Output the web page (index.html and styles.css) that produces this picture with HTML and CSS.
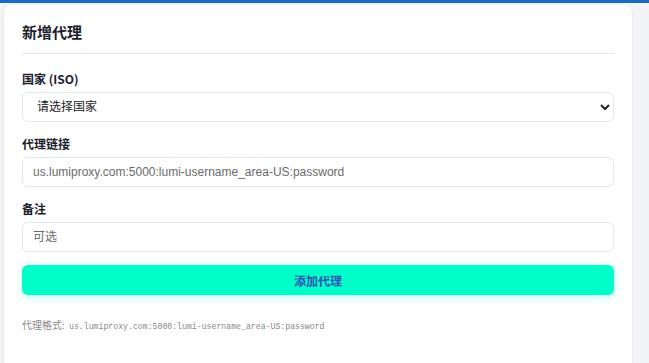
FILE: index.html
```html
<!DOCTYPE html>
<html lang="zh-CN">

<head>
    <meta charset="UTF-8">
    <meta name="viewport" content="width=device-width, initial-scale=1.0">
    <title>新增代理</title>
    <link rel="stylesheet" href="styles.css">
</head>

<body>
    <div class="top-bar"></div>

    <div class="page">
        <div class="card">
            <h2 class="card-title">新增代理</h2>

            <form class="proxy-form" onsubmit="return false;">
                <div class="field">
                    <label for="country">国家 (ISO)</label>
                    <select id="country">
                        <option value="">请选择国家</option>
                        <option value="US">US</option>
                        <option value="GB">GB</option>
                        <option value="JP">JP</option>
                    </select>
                </div>

                <div class="field">
                    <label for="proxyLink">代理链接</label>
                    <input id="proxyLink" type="text" placeholder="us.lumiproxy.com:5000:lumi-username_area-US:password">
                </div>

                <div class="field">
                    <label for="remark">备注</label>
                    <input id="remark" type="text" placeholder="可选">
                </div>

                <button type="submit" class="btn-add">添加代理</button>
            </form>

            <p class="hint">代理格式: <code>us.lumiproxy.com:5000:lumi-username_area-US:password</code></p>
        </div>
    </div>
</body>

</html>
```

FILE: styles.css
```css
:root {
    --bg-color: #f3f4f8;
    --text-color: #1a202c;
    --border-color: #e2e8f0;
    --accent: #00ffc8;
    --accent-text: #2c52b4;
    --bar-color: #1d6ac2;
}

body {
    font-family: 'Noto Sans CJK SC', 'Liberation Sans', sans-serif;
    color: var(--text-color);
    background-color: var(--bg-color);
    margin: 0;
    padding: 0;
}

.top-bar {
    height: 3px;
    background-color: var(--bar-color);
}

.page {
    padding: 2px 17px 0 4px;
}

.card {
    background: #ffffff;
    border-radius: 8px 8px 0 0;
    padding: 18px 18px 33px;
    box-shadow: 0 1px 4px rgba(0, 0, 0, 0.06);
}

.card-title {
    margin: 0 0 17px;
    padding-bottom: 12px;
    border-bottom: 1px solid var(--border-color);
    font-size: 15px;
    line-height: 18px;
    font-weight: 700;
}

.proxy-form {
    display: flex;
    flex-direction: column;
    gap: 14px;
}

.field {
    display: flex;
    flex-direction: column;
}

.field label {
    font-size: 12px;
    line-height: 16px;
    font-weight: 700;
    margin-bottom: 5px;
}

.field input,
.field select {
    box-sizing: border-box;
    height: 30px;
    padding: 0 10px;
    border: 1px solid var(--border-color);
    border-radius: 6px;
    background-color: #ffffff;
    font-family: 'Liberation Sans', 'Noto Sans CJK SC', sans-serif;
    font-size: 12px;
    color: #222;
}

.field input::placeholder {
    color: #6b6b6b;
}

.btn-add {
    margin-top: -1px;
    height: 30px;
    border: none;
    border-radius: 6px;
    background-color: var(--accent);
    color: var(--accent-text);
    font-family: 'Noto Sans CJK SC', sans-serif;
    font-size: 12px;
    font-weight: 700;
    cursor: pointer;
    box-shadow: 0 2px 8px rgba(0, 255, 200, 0.3);
}

.hint {
    margin: 23px 0 0;
    font-size: 10px;
    line-height: 14px;
    color: #888;
}

.hint code {
    margin-left: 2px;
    font-family: 'Liberation Mono', monospace;
    font-size: 8.2px;
}
```
